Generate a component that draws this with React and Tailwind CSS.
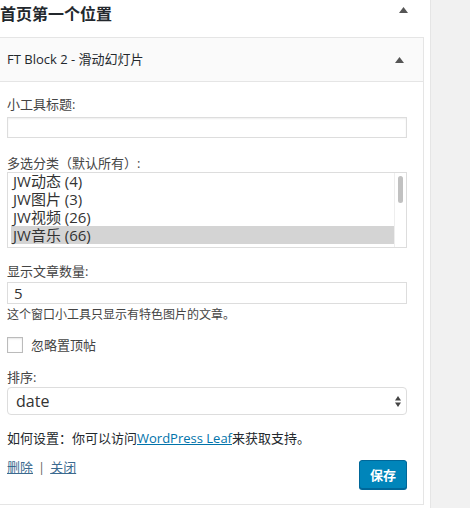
import React from 'react';

const categories = [
  { name: 'JW动态 (4)' },
  { name: 'JW图片 (3)' },
  { name: 'JW视频 (26)' },
  { name: 'JW音乐 (66)', selected: true },
  { name: 'Songs (Playlist) (44)' },
];

function Arrow({ className }) {
  return (
    <svg width="9" height="6" viewBox="0 0 9 6" className={className}>
      <path d="M0 6 L4.5 0 L9 6 Z" fill="#555" />
    </svg>
  );
}

export default function App() {
  return (
    <div className="flex h-[508px] w-[470px] overflow-hidden bg-white text-[#444]" style={{ fontFamily: '"Open Sans", "Noto Sans CJK SC", sans-serif' }}>
      <div className="w-[431px] shrink-0 border-r border-[#e5e5e5] bg-white">
        <div className="flex h-[37px] items-start justify-between pr-[22px]">
          <h2 className="pt-[3px] text-[16px] font-bold leading-[22px] text-[#23282d]">首页第一个位置</h2>
          <Arrow className="mt-[7px]" />
        </div>

        <div className="w-[424px] border border-l-0 border-[#e5e5e5]">
          <div className="flex h-[44px] items-center justify-between border-b border-[#e5e5e5] bg-[#fafafa] pl-[7px] pr-[19px]">
            <span className="text-[13px] text-[#23282d]">FT Block 2 - 滑动幻灯片</span>
            <Arrow className="mt-[1px]" />
          </div>

          <div className="pl-[7px] pr-[16px] pt-[13px] pb-[15px] text-[13px] leading-[18px]">
            <label className="block">小工具标题:</label>
            <div className="mt-[4px] h-[21px] w-[400px] border border-[#ddd] shadow-[inset_0_1px_2px_rgba(0,0,0,0.07)]" />

            <label className="mt-[16px] block">多选分类（默认所有）:</label>
            <div className="flex h-[76px] w-[400px] overflow-hidden border border-[#ddd] text-[15px] leading-[18px] text-[#333]">
              <div className="-mt-[1px] flex-1 overflow-hidden pl-[3px]">
                {categories.map(c => (
                  <div key={c.name} className={c.selected ? 'bg-[#d4d4d4] pl-[2px]' : 'pl-[2px]'}>
                    {c.name}
                  </div>
                ))}
              </div>
              <div className="flex w-[12px] justify-center border-l border-[#eee] pt-[3px]">
                <div className="h-[27px] w-[5px] rounded-full bg-[#c1c1c1]" />
              </div>
            </div>

            <label className="mt-[14px] block">显示文章数量:</label>
            <div className="mt-[2px] flex h-[22px] w-[400px] items-center border border-[#ddd] pl-[6px] text-[15px] text-[#333]">5</div>
            <p className="mt-[1px] text-[12px] leading-[20px]">这个窗口小工具只显示有特色图片的文章。</p>

            <div className="mt-[11px] flex items-center">
              <div className="h-[16px] w-[16px] border border-[#bbb] shadow-[inset_0_1px_2px_rgba(0,0,0,0.1)]" />
              <span className="ml-[8px] text-[13px]">忽略置顶帖</span>
            </div>

            <label className="mt-[14px] block">排序:</label>
            <div className="mt-[1px] flex h-[28px] w-[400px] items-center justify-between rounded-[4px] border border-[#ddd] pl-[8px] pr-[5px] text-[16px] text-[#333]">
              <span>date</span>
              <svg width="6" height="11" viewBox="0 0 6 11">
                <path d="M0 4.5 L3 0 L6 4.5 Z" fill="#444" />
                <path d="M0 6.5 L3 11 L6 6.5 Z" fill="#444" />
              </svg>
            </div>

            <p className="mt-[14px] text-[13px] leading-[18px] text-[#23282d]">
              如何设置：你可以访问<a href="#" className="text-[#0073aa] underline">WordPress Leaf</a>来获取支持。
            </p>

            <div className="mt-[12px] flex items-start justify-between">
              <div className="text-[13px] leading-[16px]">
                <a href="#" className="text-[#3b6a8f] underline">删除</a>
                <span className="mx-[5px] text-[#666]">|</span>
                <a href="#" className="text-[#3b6a8f] underline">关闭</a>
              </div>
              <button className="mt-[1px] h-[29px] w-[48px] rounded-[3px] border border-[#006799] bg-[#0085ba] text-[13px] font-bold text-white shadow-[0_1px_0_#006799]">
                保存
              </button>
            </div>
          </div>
        </div>
      </div>
      <div className="flex-1 bg-[#f1f1f1]" />
    </div>
  );
}
